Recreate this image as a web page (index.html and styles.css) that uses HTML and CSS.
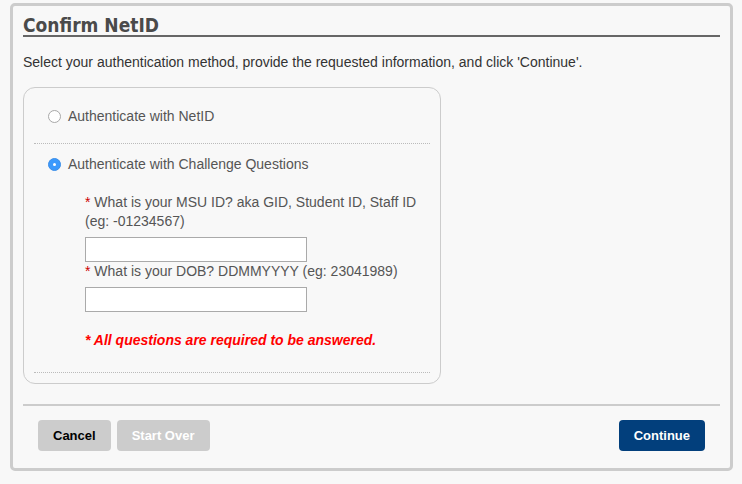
FILE: index.html
```html
<!DOCTYPE html>
<html lang="en">
<head>
    <meta charset="UTF-8">
    <meta name="viewport" content="width=device-width, initial-scale=1.0">
    <title>Confirm NetID</title>
    <link rel="stylesheet" href="styles.css">
</head>
<body>
    <div class="card">
        <h2>Confirm NetID</h2>
        <p class="intro">Select your authentication method, provide the requested information, and click 'Continue'.</p>

        <div class="auth-box">
            <div class="option option-first">
                <label class="choice"><span class="radio"></span>Authenticate with NetID</label>
            </div>
            <div class="option option-second">
                <label class="choice"><span class="radio checked"></span>Authenticate with Challenge Questions</label>
                <div class="questions">
                    <div class="question"><span class="req">*</span> What is your MSU ID? aka GID, Student ID, Staff ID (eg: -01234567)</div>
                    <input type="text" class="answer">
                    <div class="question"><span class="req">*</span> What is your DOB? DDMMYYYY (eg: 23041989)</div>
                    <input type="text" class="answer">
                    <div class="error">* All questions are required to be answered.</div>
                </div>
            </div>
        </div>

        <div class="actions">
            <div class="left-buttons">
                <button class="btn btn-cancel">Cancel</button>
                <button class="btn btn-start">Start Over</button>
            </div>
            <button class="btn btn-continue">Continue</button>
        </div>
    </div>
</body>
</html>
```

FILE: styles.css
```css
body {
    font-family: "Liberation Sans", Arial, sans-serif;
    background-color: #f8f8f8;
    margin: 3px 9px 7px 10px;
    padding: 0;
}
.card {
    height: 468px;
    padding: 9px 10px 0 10px;
    border: 3px solid #cccccc;
    border-radius: 5px;
    background-color: #f8f8f8;
    box-sizing: border-box;
}
h2 {
    margin: 0;
    font-family: "Liberation Sans Narrow", "DejaVu Sans Condensed", sans-serif;
    font-size: 19px;
    line-height: 20px;
    color: #4a4a4a;
    padding-bottom: 0;
    border-bottom: 2px solid #666666;
}
.intro {
    margin: 15px 0 15px 0;
    font-size: 14px;
    line-height: 20px;
    color: #333333;
}
.auth-box {
    width: 418px;
    box-sizing: border-box;
    border: 1px solid #cccccc;
    border-radius: 12px;
    padding: 0 10px 10px 10px;
}
.option {
    border-bottom: 1px dotted #bbbbbb;
}
.option-first {
    padding: 18px 14px 17px 14px;
}
.option-second {
    padding: 10px 14px 22px 14px;
}
.choice {
    display: flex;
    align-items: center;
    font-size: 14px;
    line-height: 20px;
    color: #555555;
}
.radio {
    width: 11px;
    height: 11px;
    border: 1px solid #a8a8a8;
    border-radius: 50%;
    background-color: #fff;
    margin-right: 7px;
    flex-shrink: 0;
    position: relative;
}
.radio.checked {
    background-color: #3b99fc;
    border-color: #3b8ee8;
}
.radio.checked::after {
    content: "";
    position: absolute;
    left: 4px;
    top: 4px;
    width: 3px;
    height: 3px;
    border-radius: 50%;
    background-color: #fff;
}
.questions {
    padding-left: 37px;
    margin-top: 19px;
}
.question {
    font-size: 14px;
    line-height: 19px;
    color: #555555;
    width: 340px;
}
.req {
    color: #cc0000;
}
.answer {
    display: block;
    width: 222px;
    height: 25px;
    box-sizing: border-box;
    border: 1px solid #aaaaaa;
    background-color: #fff;
    margin: 5px 0 0 0;
    padding: 0 4px;
}
.question + .answer {
    margin-top: 6px;
}
.error {
    margin-top: 18px;
    font-size: 14px;
    line-height: 20px;
    font-weight: bold;
    font-style: italic;
    color: #ff0000;
}
.actions {
    display: flex;
    justify-content: space-between;
    margin-top: 20px;
    padding: 14px 15px 0 15px;
    border-top: 2px solid #cccccc;
}
.left-buttons {
    display: flex;
    gap: 6px;
}
.btn {
    height: 31px;
    padding: 0 15px;
    border: none;
    border-radius: 4px;
    font-family: "Liberation Sans", Arial, sans-serif;
    font-size: 13px;
    font-weight: bold;
    cursor: pointer;
}
.btn-cancel {
    background-color: #cccccc;
    color: #000;
}
.btn-start {
    background-color: #cccccc;
    color: #fff;
}
.btn-continue {
    background-color: #023f7c;
    color: #fff;
}
```
